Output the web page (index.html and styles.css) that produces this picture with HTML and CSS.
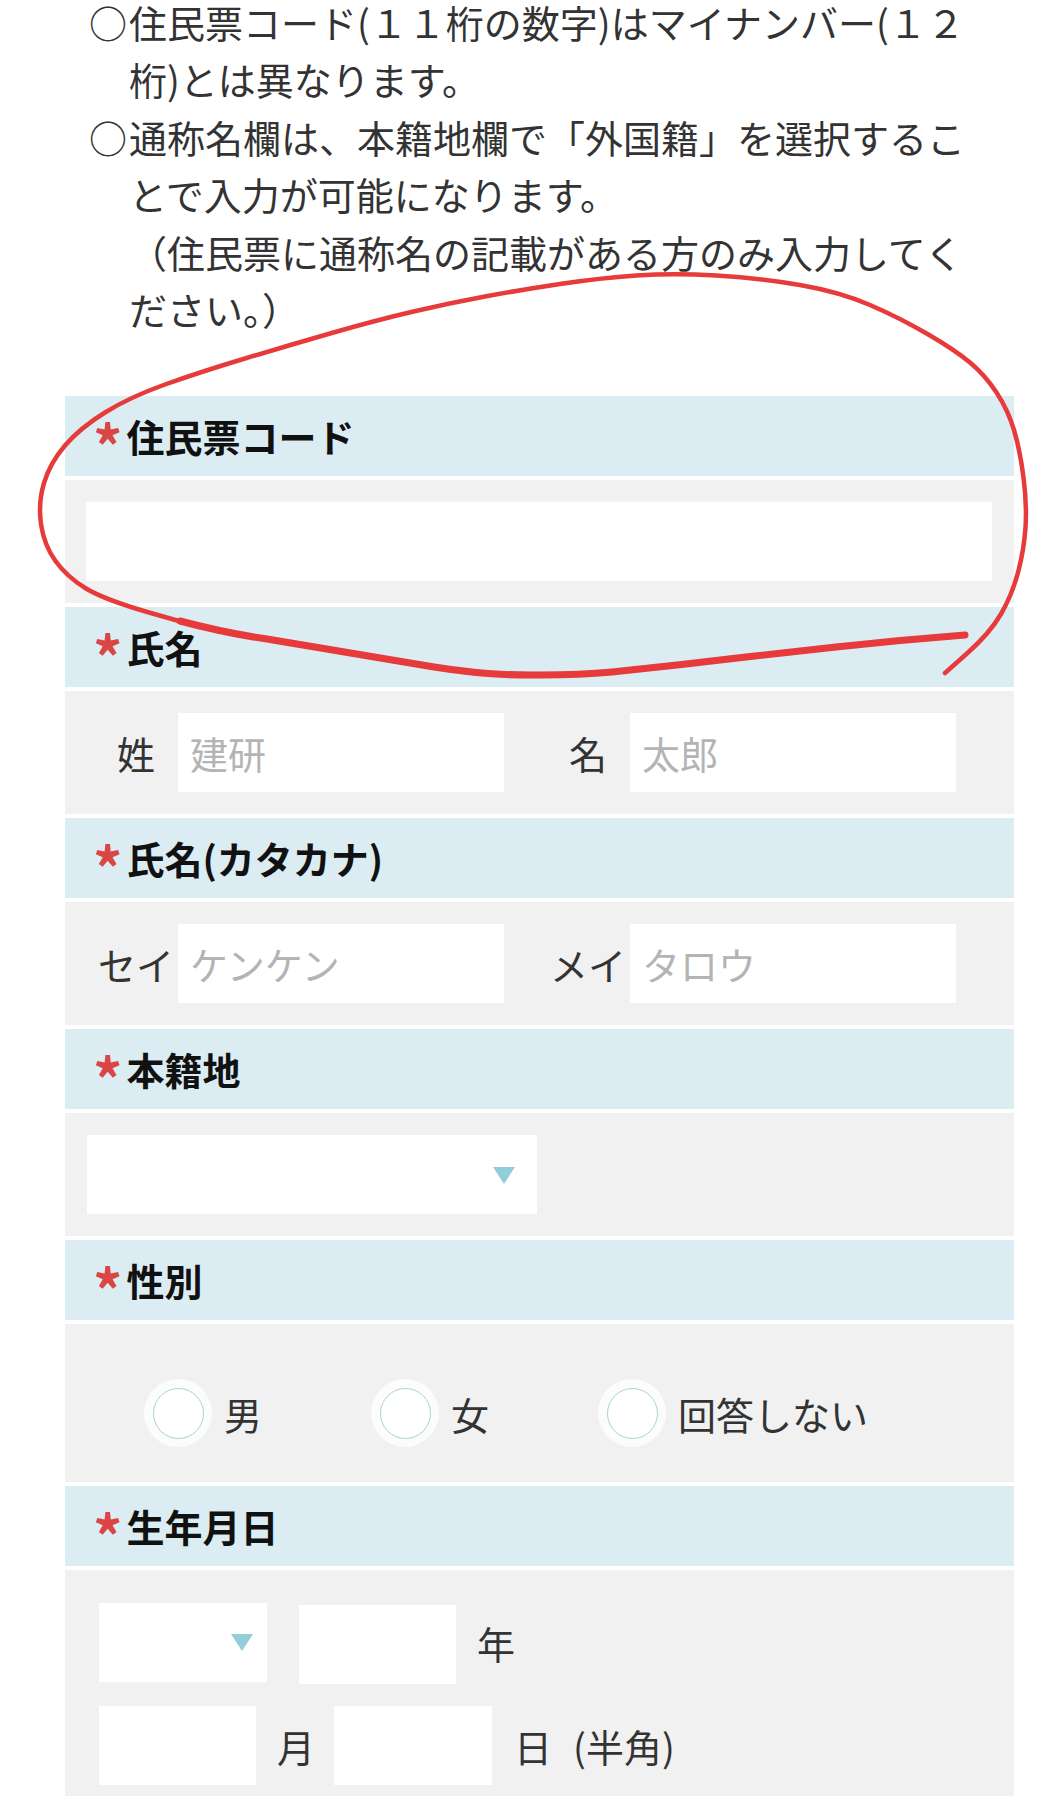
FILE: index.html
```html
<!DOCTYPE html>
<html lang="ja">
<head>
<meta charset="utf-8">
<title>住民票コード入力</title>
<link rel="stylesheet" href="styles.css">
</head>
<body>
<div class="page">
  <div class="notes">
    <div class="note">
      <span class="mark">○</span>
      <p>住民票コード(１１桁の数字)はマイナンバー(１２<br>桁)とは異なります。</p>
    </div>
    <div class="note">
      <span class="mark">○</span>
      <p>通称名欄は、本籍地欄で「外国籍」を選択するこ<br>とで入力が可能になります。<br>（住民票に通称名の記載がある方のみ入力してく<br>ださい。）</p>
    </div>
  </div>

  <div class="form">
    <div class="head"><span class="req">*</span>住民票コード</div>
    <div class="body">
      <input class="field field-full" type="text">
    </div>

    <div class="head"><span class="req">*</span>氏名</div>
    <div class="body body-pair">
      <span class="lbl">姓</span><input class="field field-half" type="text" placeholder="建研">
      <span class="lbl lbl-second">名</span><input class="field field-half" type="text" placeholder="太郎">
    </div>

    <div class="head"><span class="req">*</span>氏名(カタカナ)</div>
    <div class="body body-pair">
      <span class="lbl">セイ</span><input class="field field-half" type="text" placeholder="ケンケン">
      <span class="lbl lbl-second">メイ</span><input class="field field-half" type="text" placeholder="タロウ">
    </div>

    <div class="head"><span class="req">*</span>本籍地</div>
    <div class="body">
      <div class="select select-wide"></div>
    </div>

    <div class="head"><span class="req">*</span>性別</div>
    <div class="body body-radio">
      <label class="radio"><span class="dot"></span>男</label>
      <label class="radio"><span class="dot"></span>女</label>
      <label class="radio"><span class="dot"></span>回答しない</label>
    </div>

    <div class="head"><span class="req">*</span>生年月日</div>
    <div class="body body-date">
      <div class="date-row">
        <div class="select select-era"></div>
        <input class="field field-num field-year" type="text">
        <span class="unit">年</span>
      </div>
      <div class="date-row">
        <input class="field field-num" type="text">
        <span class="unit">月</span>
        <input class="field field-num field-day" type="text">
        <span class="unit unit-day">日</span>
        <span class="unit unit-note">(半角)</span>
      </div>
    </div>
  </div>
</div>

<svg class="mark-up" width="1056" height="720" viewBox="0 0 1056 720" aria-hidden="true">
  <path class="loop" d="M945 673 L967.5 653 Q990 633 1001 614 Q1012 595 1018 572.5 Q1024 550 1025.5 527.5 Q1027 505 1023.5 477.5 Q1020 450 1014 430 Q1008 410 996.5 392.5 Q985 375 970 362.5 Q955 350 927.5 334 Q900 318 870 305 Q840 292 800 285 Q760 278 716.5 275.5 Q673 273 636.5 275.5 Q600 278 560 284 Q520 290 485 296.5 Q450 303 413.5 311.5 Q377 320 333.5 332.5 Q290 345 245 358.5 Q200 372 165 384.5 Q130 397 105 412.5 Q80 428 65 445.5 Q50 463 44 483 Q38 503 41 524 Q44 545 55.5 561 Q67 577 86 588.5 Q105 600 152.5 613.5 L200 627"/>
  <path class="sweep" d="M180 621 Q225 633 267 639 Q345 652 434 667 Q490 676 541 675 Q580 675 612 672 Q680 665 746 657 Q790 652 836 647 Q900 640 965 635"/>
</svg>
</body>
</html>
```

FILE: styles.css
```css
* {
  box-sizing: border-box;
}

html, body {
  margin: 0;
  background: #ffffff;
}

body {
  position: relative;
  font-family: "Noto Sans CJK JP", "Noto Sans", sans-serif;
  color: #333333;
  overflow: hidden;
}

.page {
  padding: 0 42px 0 65px;
}

/* notes */
.notes {
  margin-top: -7px;
  padding-left: 24px;
  font-size: 38px;
  line-height: 57.4px;
  color: #333333;
}

.note {
  display: flex;
}

.mark {
  flex: none;
  width: 40px;
}

.note p {
  margin: 0;
  white-space: nowrap;
}

/* form */
.form {
  margin-top: 59px;
  display: flex;
  flex-direction: column;
  gap: 4px;
}

.head {
  height: 80px;
  line-height: 80px;
  background: #dbecf2;
  padding-left: 28px;
  font-size: 38px;
  font-weight: 700;
  color: #111111;
  white-space: nowrap;
}

.req {
  color: #da4643;
  font-size: 58px;
  line-height: 1;
  vertical-align: -17px;
  margin-right: 4px;
}

.body {
  background: #f1f1f1;
  padding: 22px 22px 22px 21px;
}

.field {
  display: block;
  height: 79px;
  border: 0;
  border-radius: 0;
  outline: none;
  background: #ffffff;
  font-family: inherit;
  font-size: 38px;
  color: #333333;
  padding: 0 12px;
  margin: 0;
}

.field::placeholder {
  color: #b4b4b4;
}

.field-full {
  width: 100%;
}

/* name pairs */
.body-pair {
  display: flex;
  align-items: center;
  padding: 22px 0 22px 31px;
}

.lbl {
  width: 80px;
  text-align: center;
  font-size: 38px;
  color: #333333;
  white-space: nowrap;
}

.lbl-second {
  margin-left: 44px;
}

.field-half {
  width: 326px;
  margin-left: 2px;
}

/* select */
.select {
  position: relative;
  height: 79px;
  background: #ffffff;
}

.select::after {
  content: "";
  position: absolute;
  top: 50%;
  margin-top: -8px;
  width: 0;
  height: 0;
  border-left: 11px solid transparent;
  border-right: 11px solid transparent;
  border-top: 17px solid #92cdd9;
}

.select-wide {
  width: 450px;
  margin-left: 1px;
}

.select-wide::after {
  right: 22px;
}

.select-era {
  width: 168px;
}

.select-era::after {
  right: 14px;
}

/* radios */
.body-radio {
  display: flex;
  align-items: center;
  gap: 109px;
  padding: 55px 0 35px 79px;
}

.radio {
  display: flex;
  align-items: center;
  gap: 12px;
  font-size: 38px;
  color: #333333;
  white-space: nowrap;
}

.dot {
  width: 68px;
  height: 68px;
  border-radius: 50%;
  background: #fcfcfc;
  display: flex;
  align-items: center;
  justify-content: center;
}

.dot::after {
  content: "";
  width: 49px;
  height: 49px;
  border: 1.5px solid #a6d3d9;
  border-radius: 50%;
  background: #ffffff;
}

/* date */
.body-date {
  display: flex;
  flex-direction: column;
  gap: 22px;
  padding: 30px 0 22px 34px;
}

.date-row {
  display: flex;
  align-items: center;
}

.field-num {
  width: 157px;
}

.field-year {
  margin-left: 32px;
  margin-top: 5px;
}

.field-day {
  margin-left: 19px;
  width: 158px;
}

.unit {
  margin-left: 21px;
  font-size: 38px;
  color: #333333;
  white-space: nowrap;
}

.unit-day {
  margin-left: 22px;
}

.unit-note {
  margin-left: 21px;
}

/* hand-drawn red annotation over the page */
.mark-up {
  position: absolute;
  top: 0;
  left: 0;
  pointer-events: none;
}

.mark-up path {
  fill: none;
  stroke: #e63a3b;
  stroke-linecap: round;
  stroke-linejoin: round;
}

.loop {
  stroke-width: 4.5;
}

.sweep {
  stroke-width: 7;
}
```
